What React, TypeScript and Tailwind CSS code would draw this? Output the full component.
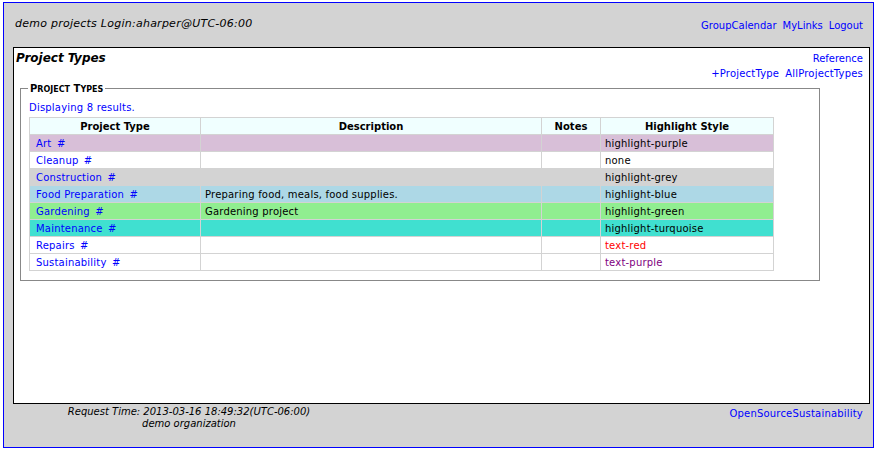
const rows = [
  { name: "Art", desc: "", style: "highlight-purple", bg: "bg-[#d8bfd8]", color: "text-black" },
  { name: "Cleanup", desc: "", style: "none", bg: "bg-white", color: "text-black" },
  { name: "Construction", desc: "", style: "highlight-grey", bg: "bg-[#d3d3d3]", color: "text-black" },
  { name: "Food Preparation", desc: "Preparing food, meals, food supplies.", style: "highlight-blue", bg: "bg-[#add8e6]", color: "text-black" },
  { name: "Gardening", desc: "Gardening project", style: "highlight-green", bg: "bg-[#90ee90]", color: "text-black" },
  { name: "Maintenance", desc: "", style: "highlight-turquoise", bg: "bg-[#40e0d0]", color: "text-black" },
  { name: "Repairs", desc: "", style: "text-red", bg: "bg-white", color: "text-[#ff0000]" },
  { name: "Sustainability", desc: "", style: "text-purple", bg: "bg-white", color: "text-[#800080]" },
]

export default function App() {
  return (
    <div className="w-[877px] h-[452px] bg-white pt-[2px] pl-[3px] font-['DejaVu_Sans',sans-serif] text-[10px] text-black">
      <div className="w-[871px] h-[446px] bg-[#d3d3d3] border border-[#0000ff] flex flex-col">
        {/* header */}
        <div className="h-[44px] flex justify-between pl-[11px] pr-[10px]">
          <div className="pt-[13px] italic text-[11px] tracking-[0.25px]">demo projects Login:aharper@UTC-06:00</div>
          <div className="pt-[15px] flex gap-[6px] text-[#0000ff]">
            <a>GroupCalendar</a>
            <a>MyLinks</a>
            <a>Logout</a>
          </div>
        </div>

        {/* body */}
        <div className="ml-[9px] w-[857px] h-[357px] bg-white border border-black px-[2px]">
          <div className="flex justify-between">
            <div className="font-bold italic text-[12px] pt-[1px]">Project Types</div>
            <div className="flex flex-col items-end text-[#0000ff] pr-[4px] pt-[3px] leading-[15px]">
              <a>Reference</a>
              <div className="flex gap-[6px] tracking-[0.2px]">
                <a>+ProjectType</a>
                <a>AllProjectTypes</a>
              </div>
            </div>
          </div>

          <fieldset className="ml-[4px] mt-0 w-[800px] h-[200px] border border-[#888888] pl-[8px] pt-0">
            <legend className="font-bold text-[10px] px-[2px] ml-[-1px]">
              P<span className="text-[8px]">ROJECT</span> T<span className="text-[8px]">YPES</span>
            </legend>
            <div className="text-[#0000ff] mt-[4px] tracking-[0.2px]">Displaying 8 results.</div>
            <table className="mt-[2px] w-[745px] border-collapse border border-[#d3d3d3]">
              <thead>
                <tr className="bg-[#f0ffff] h-[17px]">
                  <th className="w-[171px] border border-[#d3d3d3] font-bold">Project Type</th>
                  <th className="w-[341px] border border-[#d3d3d3] font-bold">Description</th>
                  <th className="w-[59px] border border-[#d3d3d3] font-bold">Notes</th>
                  <th className="border border-[#d3d3d3] font-bold">Highlight Style</th>
                </tr>
              </thead>
              <tbody>
                {rows.map((r) => (
                  <tr key={r.name} className={`${r.bg} h-[17px]`}>
                    <td className="border border-[#d3d3d3] pl-[6px] text-[#0000ff] tracking-[0.2px]">
                      {r.name} <span className="ml-[2px]">#</span>
                    </td>
                    <td className="border border-[#d3d3d3] pl-[4px] tracking-[0.2px]">{r.desc}</td>
                    <td className="border border-[#d3d3d3]"></td>
                    <td className={`border border-[#d3d3d3] pl-[4px] tracking-[0.2px] ${r.color}`}>{r.style}</td>
                  </tr>
                ))}
              </tbody>
            </table>
          </fieldset>
        </div>

        {/* footer */}
        <div className="flex justify-between pr-[10px] pt-[2px]">
          <div className="w-[370px] text-center italic leading-[12px]">
            <div>Request Time: 2013-03-16 18:49:32(UTC-06:00)</div>
            <div>demo organization</div>
          </div>
          <a className="text-[#0000ff] tracking-[0.2px]">OpenSourceSustainability</a>
        </div>
      </div>
    </div>
  )
}
